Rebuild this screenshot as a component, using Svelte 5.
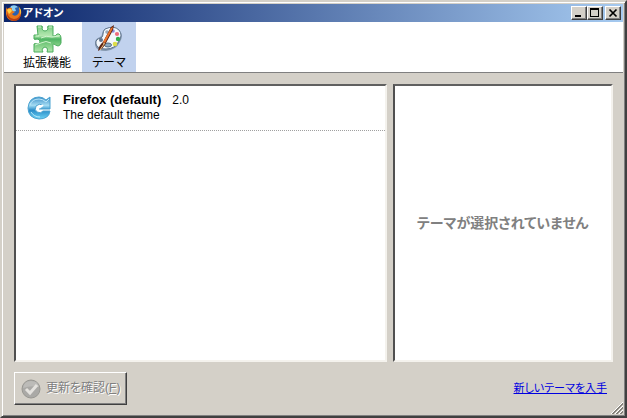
<script>
	let pane = 'themes';

	const themes = [{ name: 'Firefox (default)', version: '2.0', description: 'The default theme' }];
	let selected = null;
</script>

<div class="window">
	<header class="titlebar">
		<svg class="logo" viewBox="0 0 18 18" aria-hidden="true">
			<circle cx="9" cy="8" r="6.5" fill="#2860b0" />
			<path d="M6 2q4-2 7 1l-3 1 1 3-4 1-2-3z" fill="#8ccdf0" />
			<path d="M1 2q0 2 1 3 2-2 5-1-1 2 1 3l2 1-3 2q2 3 5 1 3-2 2-7 3 2 2 6-1 6-7 7-7 0-8-7 0-4 0-8z" fill="#e8781c" />
			<path d="M2 8q1 6 7 7 6 0 7-7 0 9-7 9-8-1-7-9z" fill="#b93d12" />
			<path d="M13 2q5 4 2 9 1-5-2-9zM2 6q2-2 4-1l1 2-3 3z" fill="#ffd044" />
		</svg>
		<h1>アドオン</h1>
		<div class="controls">
			<button aria-label="Minimize">
				<svg viewBox="0 0 12 10" shape-rendering="crispEdges"><path d="M2 7h6v2H2z" /></svg>
			</button>
			<button aria-label="Maximize">
				<svg viewBox="0 0 12 10" shape-rendering="crispEdges"><path d="M1 0h9v9H1zM2 2v6h7V2z" fill-rule="evenodd" /></svg>
			</button>
			<button class="close" aria-label="Close">
				<svg viewBox="0 0 12 10"><path d="M2.5 1.5l7 7M9.5 1.5l-7 7" stroke="#000" stroke-width="1.7" /></svg>
			</button>
		</div>
	</header>

	<nav class="toolbar">
		<button class:active={pane === 'extensions'} on:click={() => (pane = 'extensions')}>
			<svg viewBox="0 0 32 28" aria-hidden="true">
				<defs>
					<linearGradient id="puzzle" x2="0" y2="1">
						<stop offset="0" stop-color="#7ccb84" />
						<stop offset=".38" stop-color="#b4e8b0" />
						<stop offset=".5" stop-color="#4fb463" />
						<stop offset=".7" stop-color="#7acb80" />
						<stop offset="1" stop-color="#b4e8ae" />
					</linearGradient>
				</defs>
				<path
					d="M6 1h5q1 1 0 3 1 2 3 2t3-2q-1-2 0-3h5v8q-1 2 1 2 2 0 3-2h2q2 1 2 4v5q-1 3-3 3-3-1-4-2-2 0-1 2v6h-6q1-2 0-4-2-2-4 0-2 2 0 4H3v-8q1-1 3 0 3 0 3-2 0-3-3-3-2 1-3 0v-4h4z"
					fill="url(#puzzle)"
					stroke="#4bad5c"
				/>
				<path d="M7 2h3M18 2h3M5 11h3M10 13q5-3 11-1l7-1M4 20l6-2q5-3 10 0" fill="none" stroke="#d0f2cc" />
			</svg>
			<span>拡張機能</span>
		</button>
		<button class:active={pane === 'themes'} on:click={() => (pane = 'themes')}>
			<svg viewBox="0 0 32 28" aria-hidden="true">
				<path d="M12 4q8-4 14 1 5 5 1 12-4 8-14 9-10 0-11-6-1-6 5-8 2-1 2-3 0-3 3-5z" fill="#8497ae" />
				<path d="M12 4q9-4 14 1 4 5 0 11-4 8-13 8-9 0-10-5-1-5 5-6 2-1 2-4 0-3 2-5z" fill="#f4f8fb" stroke="#60758f" />
				<circle cx="14" cy="7" r="1.8" fill="#9aa9ba" />
				<circle cx="20" cy="6" r="1.8" fill="#8f8bdb" />
				<circle cx="24" cy="9" r="2.1" fill="#ef6b7c" />
				<circle cx="25" cy="14" r="2.2" fill="#32ad4b" />
				<circle cx="22" cy="19" r="2.3" fill="#dddd48" />
				<circle cx="8" cy="15" r="2" fill="#63758e" />
				<ellipse cx="15" cy="20" rx="3.5" ry="2" fill="#8caac0" stroke="#536b83" />
				<path d="M5 26q1-6 5-9L18 2l3-2-1 5-7 13q-2 5-8 8z" fill="#5c2513" />
				<path d="M18 3l2-1-1 3-7 13-2-1z" fill="#ed742d" />
				<path d="M10 18l2 1M7 25l4-6" stroke="#efc58a" />
			</svg>
			<span>テーマ</span>
		</button>
	</nav>

	<main>
		<ul class="list">
			{#each themes as theme}
				<li>
					<svg viewBox="0 0 24 24" aria-hidden="true">
						<defs>
							<linearGradient id="arrow" x2="0" y2="1">
								<stop offset="0" stop-color="#3b8cc6" />
								<stop offset=".38" stop-color="#a4dcf3" />
								<stop offset=".6" stop-color="#298cc8" />
								<stop offset="1" stop-color="#6cd2f4" />
							</linearGradient>
						</defs>
						<path
							d="M19 4l4-3v12H12l4-4q-4-2-7 1-2 4 1 6 4 2 6-1h7q-1 8-11 8-11-1-11-11Q2 1 12 1q4 0 7 3z"
							fill="url(#arrow)"
							stroke="#4aa3d1"
						/>
						<path d="M3 9q2-6 9-6 4 0 7 3l3-3M4 16q3 5 9 5" fill="none" stroke="#b9e8fa" />
						<path d="M12 12l4-3" stroke="#fff" stroke-width="2" />
					</svg>
					<div>
						<p><strong>{theme.name}</strong><span class="version">{theme.version}</span></p>
						<p>{theme.description}</p>
					</div>
				</li>
			{/each}
		</ul>
		<section class="preview">
			{#if !selected}
				<p>テーマが選択されていません</p>
			{/if}
		</section>
	</main>

	<footer>
		<button class="update" disabled>
			<svg viewBox="0 0 20 20" aria-hidden="true">
				<circle cx="10" cy="10" r="9" fill="#aaa9a6" stroke="#989792" />
				<path d="M2 9q1-7 8-7t8 6q-8-2-16 1z" fill="#bcbbb8" />
				<path d="M5 10l4 4 7-8" fill="none" stroke="#e4e2de" stroke-width="3" />
			</svg>
			<span>更新を確認(<u>F</u>)</span>
		</button>
		<a href="#themes">新しいテーマを入手</a>
	</footer>

	<svg class="grip" viewBox="0 0 12 12" aria-hidden="true">
		<path d="M0 12L12 0M4 12l8-8M8 12l4-4" stroke="#fff" />
		<path d="M1 12L12 1M2 12L12 2M5 12l7-7M6 12l6-6M9 12l3-3M10 12l2-2" stroke="#85827b" />
	</svg>
</div>

<style>
	:global(body) {
		margin: 0;
	}

	.window {
		position: relative;
		display: flex;
		flex-direction: column;
		box-sizing: border-box;
		min-height: 100vh;
		padding: 2px;
		border: 2px solid;
		border-color: #d4d0c8 #404040 #404040 #d4d0c8;
		box-shadow: inset 1px 1px #fff, inset -1px -1px #808080;
		background: #d4d0c8;
		color: #000;
		font: 12px/15px "Liberation Sans", "Noto Sans CJK JP", sans-serif;
		font-feature-settings: "palt";
	}

	h1, p, ul {
		margin: 0;
		padding: 0;
	}

	button {
		font: inherit;
		font-feature-settings: inherit;
		color: inherit;
	}

	.titlebar {
		display: flex;
		align-items: center;
		height: 18px;
		padding: 0 2px 0 1px;
		background: linear-gradient(to right, #0a246a, #a6caf0);
	}

	.logo {
		width: 18px;
		height: 18px;
	}

	h1 {
		flex: 1;
		color: #fff;
		font-size: 11px;
		line-height: 18px;
	}

	.controls {
		display: flex;
	}

	.controls button {
		display: flex;
		width: 16px;
		height: 14px;
		padding: 1px;
		border: 1px solid;
		border-color: #fff #404040 #404040 #fff;
		box-shadow: inset -1px -1px #808080;
		background: #d4d0c8;
	}

	.controls .close {
		margin-left: 2px;
	}

	.controls svg {
		width: 12px;
		height: 10px;
	}

	.toolbar {
		display: flex;
		gap: 8px;
		height: 50px;
		padding-left: 16px;
		border-bottom: 1px solid #808080;
		background: #fff;
	}

	.toolbar button {
		display: flex;
		flex-direction: column;
		align-items: center;
		min-width: 54px;
		padding: 3px 3px 0;
		border: 0;
		background: none;
	}

	.toolbar .active {
		background: #c1d2ee;
	}

	.toolbar svg {
		width: 32px;
		height: 28px;
		margin-bottom: 3px;
	}

	main {
		display: grid;
		grid-template-columns: 372fr 220fr;
		gap: 6px;
		flex: 1;
		padding: 11px 10px 10px;
	}

	.list, .preview {
		border: 2px solid;
		border-color: #606060 #f4f2ed #f4f2ed #505050;
		background: #fff;
	}

	li {
		display: flex;
		gap: 12px;
		padding: 6px 11px 8px;
		border-bottom: 1px dotted #a0a0a0;
	}

	li svg {
		width: 24px;
		height: 24px;
		margin-top: 4px;
	}

	li div {
		height: 30px;
	}

	li svg {
		margin-bottom: 2px;
	}

	strong {
		font-size: 13px;
	}

	.version {
		margin-left: 11px;
	}

	.preview {
		display: flex;
		align-items: center;
		justify-content: center;
		color: #808080;
		font-size: 14px;
		font-weight: bold;
	}

	footer {
		display: flex;
		align-items: center;
		justify-content: space-between;
		padding: 0 16px 9px 10px;
	}

	.update {
		display: flex;
		align-items: center;
		gap: 5px;
		height: 33px;
		padding: 0 6px;
		border: 1px solid;
		border-color: #fff #404040 #404040 #fff;
		box-shadow: inset -1px -1px #808080;
		background: #d4d0c8;
		color: #808080;
		text-shadow: 1px 1px #fff;
	}

	.update svg {
		width: 20px;
		height: 20px;
	}

	a {
		color: #0000e0;
		font-size: 11px;
	}

	.grip {
		position: absolute;
		right: 2px;
		bottom: 2px;
		width: 12px;
		height: 12px;
	}
</style>
